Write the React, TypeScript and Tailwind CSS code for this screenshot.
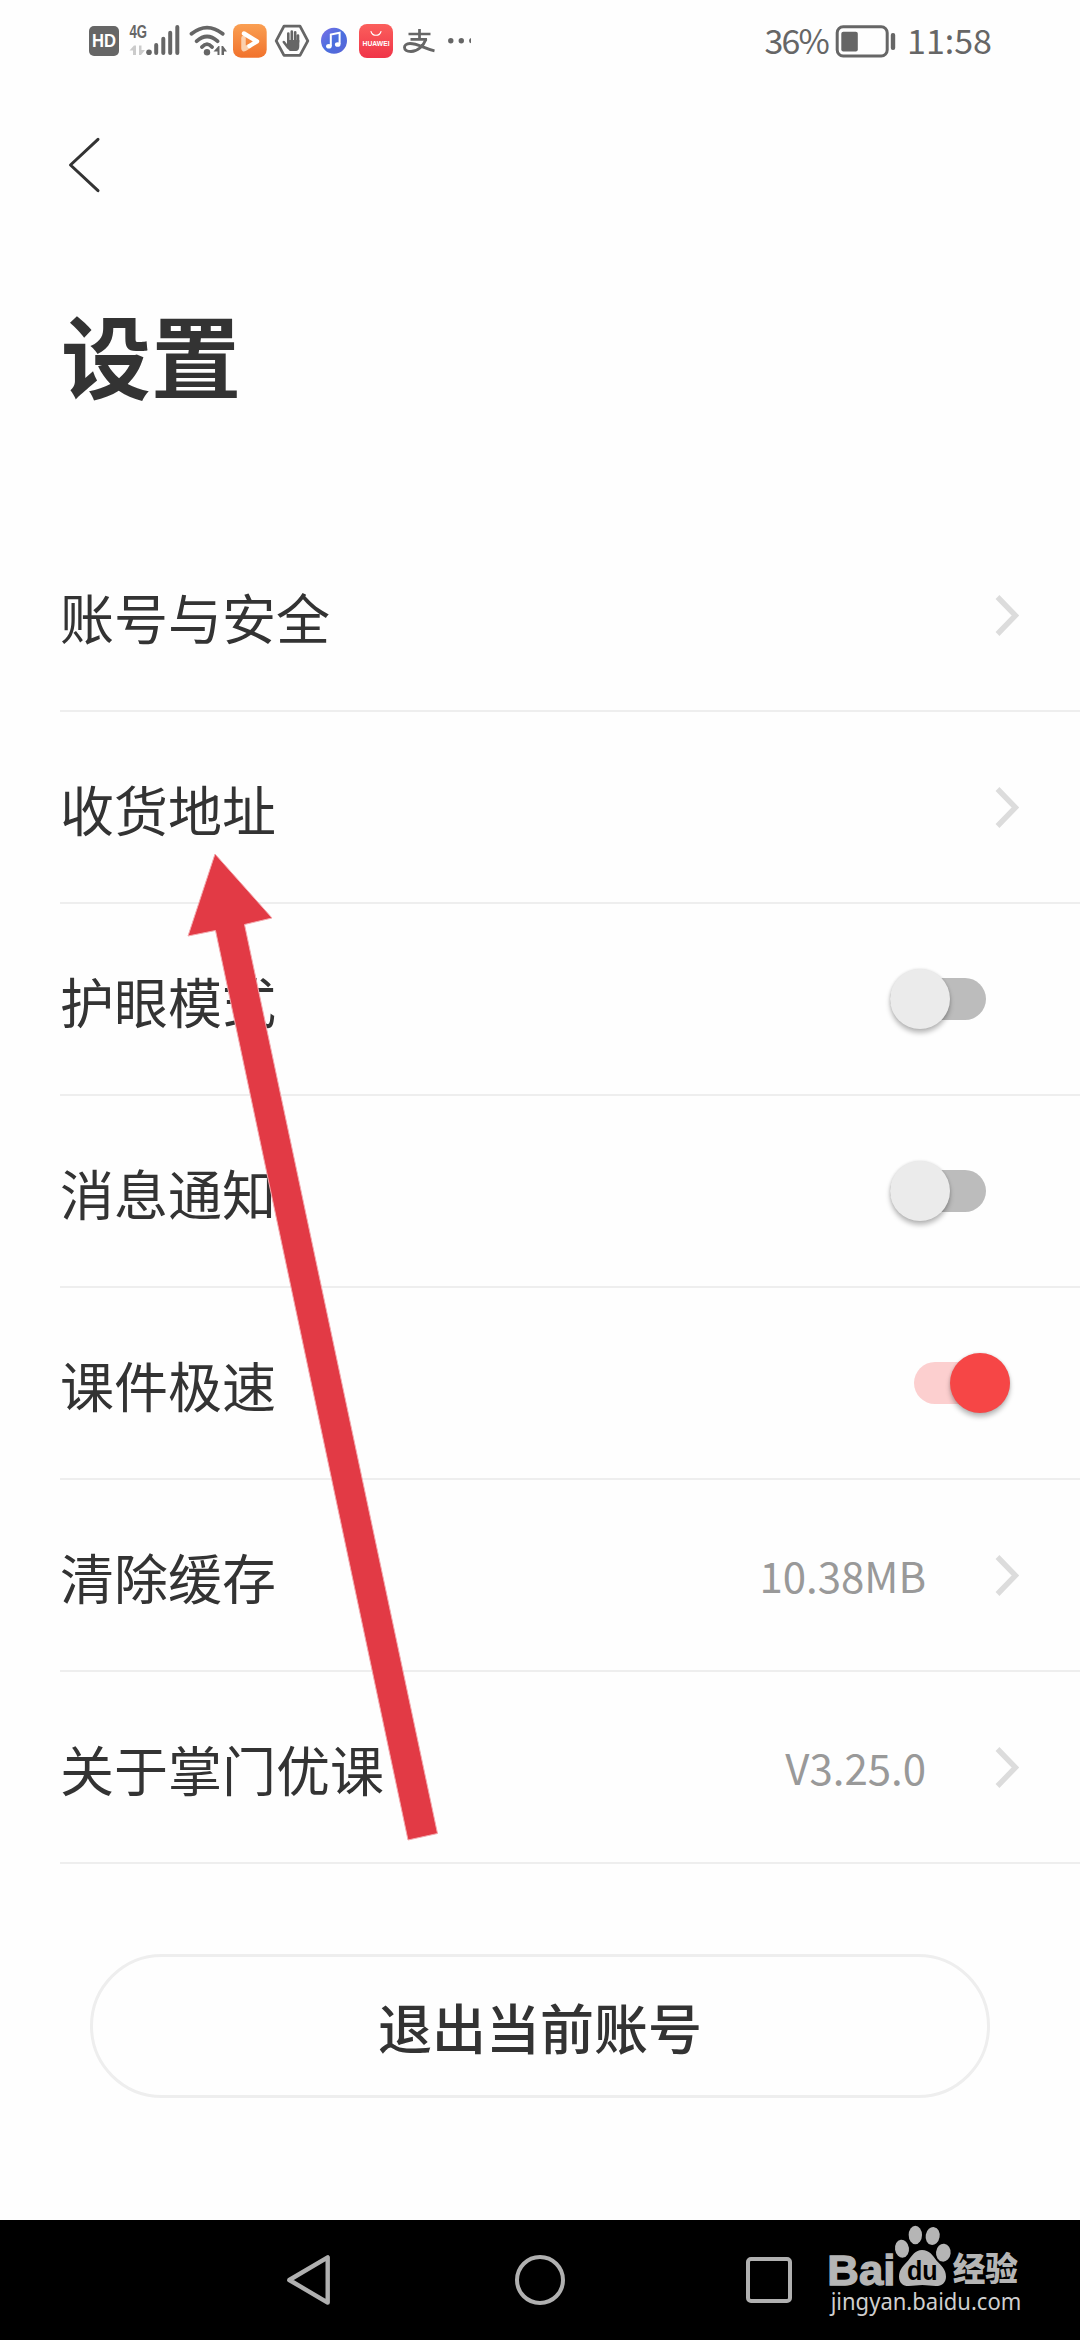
import React from "react";

type Row = { label: string; kind: "link" | "off" | "on"; value?: string };

const rows: Row[] = [
  { label: "账号与安全", kind: "link" },
  { label: "收货地址", kind: "link" },
  { label: "护眼模式", kind: "off" },
  { label: "消息通知", kind: "off" },
  { label: "课件极速", kind: "on" },
  { label: "清除缓存", kind: "link", value: "10.38MB" },
  { label: "关于掌门优课", kind: "link", value: "V3.25.0" },
];

const GREY = "#666666";

function StatusIcons() {
  return (
    <svg width="390" height="40" viewBox="86 21 390 40" fill="none">
      <defs>
        <linearGradient id="orange" x1="0" y1="0" x2="0" y2="1">
          <stop offset="0" stopColor="#fa9f52" />
          <stop offset="1" stopColor="#f1722c" />
        </linearGradient>
        <linearGradient id="red" x1="0" y1="0" x2="0" y2="1">
          <stop offset="0" stopColor="#fb5f5c" />
          <stop offset="1" stopColor="#f03448" />
        </linearGradient>
        <linearGradient id="blue" x1="0" y1="0" x2="1" y2="1">
          <stop offset="0" stopColor="#7d6fe6" />
          <stop offset="0.5" stopColor="#4a6fdf" />
          <stop offset="1" stopColor="#5a63d6" />
        </linearGradient>
      </defs>

      {/* HD voice */}
      <rect x="89" y="26" width="30" height="30" rx="5" fill={GREY} />
      <text x="92" y="47.4" fontSize="18" fontWeight="700" fill="#fff" textLength="24" lengthAdjust="spacingAndGlyphs" fontFamily="Liberation Sans, sans-serif">HD</text>

      {/* Mobile signal */}
      <text x="129.5" y="37.6" fontSize="18" fontWeight="700" fill={GREY} textLength="17.5" lengthAdjust="spacingAndGlyphs" fontFamily="Liberation Sans, sans-serif">4G</text>
      <path d="M129.500 50.500l4.500-5h2v9.500h-3v-4.500zM145 50l-4 5h-2v-9.500h2.500v4.500z" fill="#cbcbcb" />
      <circle cx="149" cy="52.300" r="2.800" fill={GREY} />
      <path d="M156.200 45v8M163.300 38.800V53M170.200 32.800V53M177.300 27V53" stroke={GREY} strokeWidth="4" strokeLinecap="round" />

      {/* Wi-Fi */}
      <path d="M191.500 33.800Q207 21.500 222.700 33.800M196.700 41.200Q207 31.800 217.500 41.200M202 47Q207 41.200 212 47" stroke={GREY} strokeWidth="3.800" strokeLinecap="round" />
      <circle cx="207" cy="52.300" r="3.200" fill={GREY} />
      <path d="M213.500 51.500l5-5.500h1v9h-2v-3.500zM221.500 46h1.500l4 5.500-3 0v3.500h-2.500z" fill={GREY} />

      {/* Video app */}
      <rect x="233" y="24" width="33.700" height="33.700" rx="8" fill="url(#orange)" />
      <path d="M243.500 38v10.500q0 1 1 .5l5-3" stroke="#fbd0ae" strokeWidth="4.500" strokeLinecap="round" strokeLinejoin="round" />
      <path d="M244 33.500L257 41.300L249.500 46" stroke="#fff" strokeWidth="4.400" strokeLinecap="round" strokeLinejoin="round" />

      {/* Blocker */}
      <path d="M276.200 40.800L284 26.200H300L307.800 40.800L300 55.400H284Z" stroke={GREY} strokeWidth="2.800" strokeLinejoin="round" />
      <path d="M288.300 42V33.500M291.800 41V31.600M295.200 41V32.200M298 42V35.500M288 47.500L283.800 42" stroke={GREY} strokeWidth="2.600" strokeLinecap="round" />
      <path d="M287 40h12.300v6q0 4.500-3 5h-6q-1.500 0-3.300-4z" fill={GREY} />

      {/* Music */}
      <circle cx="334" cy="40.800" r="13" fill="url(#blue)" />
      <path d="M330.800 46V34.500l8.800-1.700V44" stroke="#fff" strokeWidth="2" />
      <ellipse cx="328.900" cy="46.200" rx="2.800" ry="2.300" fill="#fff" />
      <ellipse cx="337.700" cy="44.500" rx="2.800" ry="2.300" fill="#fff" />

      {/* App store */}
      <rect x="359" y="24" width="34" height="34" rx="8" fill="url(#red)" />
      <path d="M371 31.500a5.200 5.200 0 0 0 10 0" stroke="#fff" strokeWidth="1.100" strokeLinecap="round" />
      <text x="362.600" y="45.800" fontSize="7.400" fontWeight="700" fill="#fff" textLength="27" lengthAdjust="spacingAndGlyphs" fontFamily="Liberation Sans, sans-serif">HUAWEI</text>

      {/* Payment */}
      <path d="M408.500 34H430.500M419.500 29V39M410.500 39.300H427" stroke={GREY} strokeWidth="2.700" />
      <path d="M426 39.300C423.500 45.500 418 51.500 411 51.500C402.500 51.500 402.500 43.500 410 43.500C418 43.500 424 48.500 434.500 50.800" stroke={GREY} strokeWidth="2.900" />

      {/* More notifications */}
      <circle cx="450.800" cy="40.700" r="2.700" fill={GREY} />
      <circle cx="461.300" cy="40.700" r="2.700" fill={GREY} />
      <path d="M471 38.100a2.700 2.700 0 0 0 0 5.200z" fill={GREY} />
    </svg>
  );
}

function Battery() {
  return (
    <svg width="62" height="34" viewBox="834 23 62 34" fill="none">
      <rect x="836.200" y="25.700" width="50" height="29.300" rx="6" stroke={GREY} strokeWidth="3" />
      <rect x="840.300" y="30.700" width="16.500" height="19.800" rx="2" fill={GREY} />
      <rect x="889.800" y="32" width="4.400" height="17" rx="2" fill={GREY} />
    </svg>
  );
}

function StatusBar() {
  return (
    <header className="flex h-[82px] items-center pl-[86px] pr-[88px] text-[34px] leading-none text-[#666666]">
      <StatusIcons />
      <div className="ml-auto flex items-center">
        <span className="mr-[7px] pb-[2px] tracking-[-1.8px]">36%</span>
        <Battery />
        <span className="ml-[10px] pb-[2px]">11:58</span>
      </div>
    </header>
  );
}

function Chevron() {
  return (
    <svg className="ml-[69px]" width="26" height="42" viewBox="0 0 26 42" fill="none">
      <path d="M4.500 3L22.500 21.500L4.500 40" stroke="#dcdcdc" strokeWidth="5.400" />
    </svg>
  );
}

function Toggle({ on }: { on: boolean }) {
  return (
    <div
      className={
        on
          ? "mr-[70px] flex h-[42px] w-[96px] items-center justify-end rounded-full bg-[#fccfcf]"
          : "mr-[94px] flex h-[42px] w-[96px] items-center rounded-full bg-[#bcbcbc]"
      }
    >
      <div
        className={
          on
            ? "size-[60px] shrink-0 rounded-full bg-[#f64646] shadow-[0_4px_5px_rgba(0,0,0,0.26),0_0_3px_rgba(0,0,0,0.12)]"
            : "size-[60px] shrink-0 rounded-full bg-[#ebebeb] shadow-[0_4px_5px_rgba(0,0,0,0.26),0_0_3px_rgba(0,0,0,0.12)]"
        }
      />
    </div>
  );
}

function SettingRow({ row }: { row: Row }) {
  return (
    <li className="flex h-[192px] items-center border-b-2 border-[#eeeeee]">
      <span className="pt-[3px] text-[54px] leading-[80px]">{row.label}</span>
      <div className="ml-auto flex items-center">
        {row.value && <span className="-mr-[2px] text-[42px] leading-[60px] text-[#999999]">{row.value}</span>}
        {row.kind === "link" ? (
          <div className="mr-[61px] flex">
            <Chevron />
          </div>
        ) : (
          <Toggle on={row.kind === "on"} />
        )}
      </div>
    </li>
  );
}

function Watermark() {
  return (
    <svg className="overflow-visible" width="200" height="100" viewBox="0 0 600 300" fill="none">
      <g fill="#b5b5b5">
        <text x="-2" y="194" fontSize="130" fontWeight="700" textLength="204" lengthAdjust="spacingAndGlyphs" stroke="#b5b5b5" strokeWidth="4" fontFamily="Liberation Sans, sans-serif">Bai</text>
        <ellipse cx="222" cy="86" rx="21" ry="27" transform="rotate(-8 222 86)" />
        <ellipse cx="262" cy="45" rx="20" ry="28" />
        <ellipse cx="314" cy="48" rx="21" ry="27" transform="rotate(10 314 48)" />
        <ellipse cx="346" cy="98" rx="22" ry="27" transform="rotate(6 346 98)" />
        <path d="M282 90C304 90 314 106 326 122C340 137 354 147 354 170C354 188 341 198 324 198C308 198 298 195 283 195C268 195 258 198 242 198C224 198 213 187 213 170C213 148 227 136 240 122C253 106 262 90 282 90Z" />
        <text x="374" y="184" fontSize="99" fontWeight="900" textLength="196" lengthAdjust="spacingAndGlyphs" fontFamily="Noto Sans CJK SC, sans-serif">经验</text>
      </g>
      <text x="237" y="181" fontSize="82" fontWeight="700" fill="#000" textLength="92" lengthAdjust="spacingAndGlyphs" fontFamily="Liberation Sans, sans-serif">du</text>
      <text x="8" y="270" fontSize="70" fill="#cfcfcf" textLength="572" lengthAdjust="spacingAndGlyphs" fontFamily="Noto Sans, sans-serif">jingyan.baidu.com</text>
    </svg>
  );
}

function NavBar() {
  return (
    <nav className="flex h-[120px] items-center bg-black pl-[284px]">
      <svg width="50" height="54" viewBox="284 2253 50 54" fill="none">
        <path d="M289.300 2280L327.700 2257.400V2302.600Z" stroke="#b0b0b0" strokeWidth="4.400" strokeLinejoin="round" />
      </svg>
      <div className="ml-[181px] size-[50px] rounded-full border-[4.500px] border-[#b0b0b0]" />
      <div className="ml-[181px] size-[46px] rounded-[5px] border-[4.500px] border-[#b0b0b0]" />
      <div className="ml-[36px] self-start">
        <Watermark />
      </div>
    </nav>
  );
}

export default function App() {
  return (
    <div className="relative flex h-[2340px] w-[1080px] flex-col overflow-hidden bg-[#fefefe] font-['Noto_Sans_CJK_SC',sans-serif] text-[#333333]">
      <StatusBar />
      <div className="flex h-[168px] items-center pl-[66px]">
        <svg width="40" height="60" viewBox="66 136 40 60" fill="none">
          <path d="M98 139.300L70.500 165L98 190.700" stroke="#333333" strokeWidth="3" strokeLinecap="round" strokeLinejoin="round" />
        </svg>
      </div>
      <h1 className="h-[270px] pl-[61px] pt-[38px] text-[90px] font-bold leading-[130px]">设置</h1>
      <ul className="pl-[60px]">
        {rows.map((row) => (
          <SettingRow key={row.label} row={row} />
        ))}
      </ul>
      <button className="mx-[90px] mt-[90px] flex h-[144px] items-center justify-center rounded-full border-[3px] border-[#eeeeee] pt-[1px] text-[54px] font-medium leading-[80px]">
        退出当前账号
      </button>
      <div className="mt-auto">
        <NavBar />
      </div>
      <svg className="absolute left-[180px] top-[845px]" width="270" height="1005" viewBox="180 845 270 1005">
        <path d="M215 854L272 918L244.500 924.500L437.500 1833.500L408 1840L215.500 930.500L188 936Z" fill="#e23a45" stroke="#f3a9ae" strokeWidth="1" />
      </svg>
    </div>
  );
}
